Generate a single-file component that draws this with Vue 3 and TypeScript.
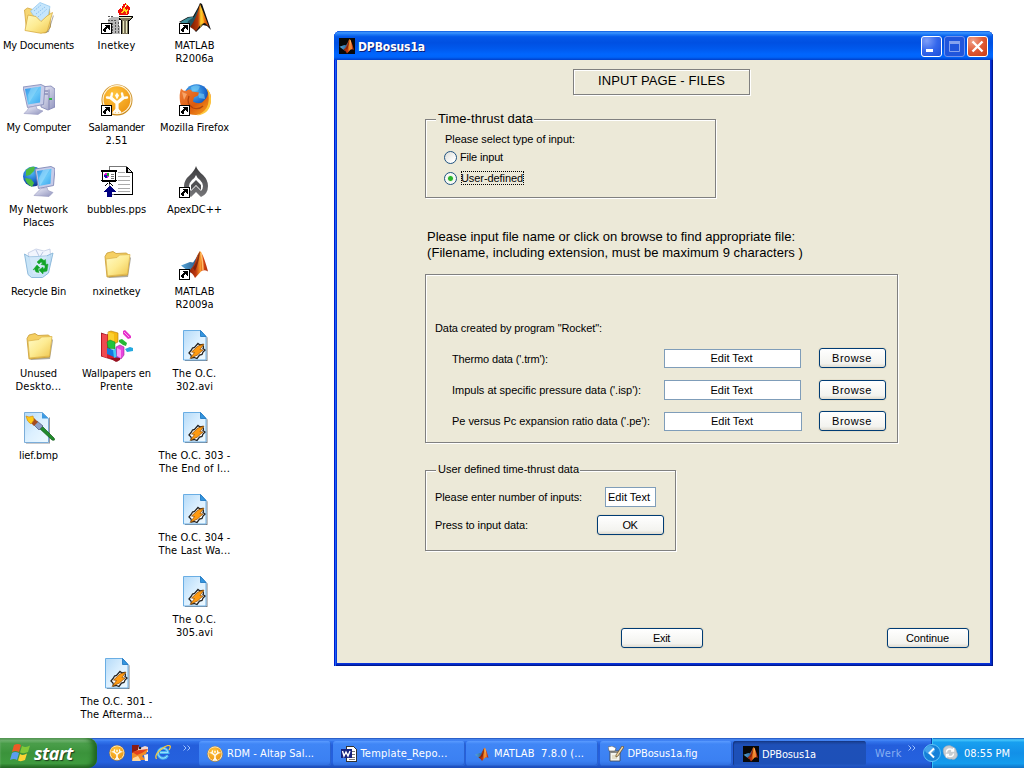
<script setup lang="ts">
import type { Directive } from 'vue'

interface Line { t: string; w: number }
interface Shortcut { icon: string; col: number; row: number; link?: boolean; lines: Line[] }

// Spreads a run of text over a given width by adjusting its letter spacing.
const vFit: Directive<HTMLElement, number> = {
  mounted(el, { value }) {
    const n = (el.textContent ?? '').length
    const natural = el.getBoundingClientRect().width
    el.style.letterSpacing = `${(value - natural) / n}px`
  },
}

const l = (t: string, w: number): Line => ({ t, w })

const shortcuts: Shortcut[] = [
  { icon: 'documents', col: 1, row: 1, lines: [l('My Documents', 71)] },
  { icon: 'inetkey', col: 2, row: 1, link: true, lines: [l('Inetkey', 38)] },
  { icon: 'matlab', col: 3, row: 1, link: true, lines: [l('MATLAB', 40), l('R2006a', 38)] },
  { icon: 'computer', col: 1, row: 2, lines: [l('My Computer', 64)] },
  { icon: 'salamander', col: 2, row: 2, link: true, lines: [l('Salamander', 56), l('2.51', 22)] },
  { icon: 'firefox', col: 3, row: 2, link: true, lines: [l('Mozilla Firefox', 69)] },
  { icon: 'network', col: 1, row: 3, lines: [l('My Network', 59), l('Places', 31)] },
  { icon: 'slides', col: 2, row: 3, lines: [l('bubbles.pps', 59)] },
  { icon: 'apex', col: 3, row: 3, link: true, lines: [l('ApexDC++', 55)] },
  { icon: 'recycle', col: 1, row: 4, lines: [l('Recycle Bin', 55)] },
  { icon: 'folder', col: 2, row: 4, lines: [l('nxinetkey', 48)] },
  { icon: 'matlab9', col: 3, row: 4, link: true, lines: [l('MATLAB', 40), l('R2009a', 38)] },
  { icon: 'folder', col: 1, row: 5, lines: [l('Unused', 37), l('Deskto...', 46)] },
  { icon: 'wallpapers', col: 2, row: 5, lines: [l('Wallpapers en', 69), l('Prente', 33)] },
  { icon: 'video', col: 3, row: 5, lines: [l('The O.C.', 44), l('302.avi', 37)] },
  { icon: 'bitmap', col: 1, row: 6, lines: [l('lief.bmp', 39)] },
  { icon: 'video', col: 3, row: 6, lines: [l('The O.C. 303 -', 72), l('The End of I...', 71)] },
  { icon: 'video', col: 3, row: 7, lines: [l('The O.C. 304 -', 72), l('The Last Wa...', 72)] },
  { icon: 'video', col: 3, row: 8, lines: [l('The O.C.', 44), l('305.avi', 37)] },
  { icon: 'video', col: 2, row: 9, lines: [l('The O.C. 301 -', 72), l('The Afterma...', 72)] },
]

const files = [
  { key: 'trm', label: "Thermo data ('.trm'):", w: 96 },
  { key: 'isp', label: "Impuls at specific pressure data ('.isp'):", w: 189 },
  { key: 'pe', label: "Pe versus Pc expansion ratio data ('.pe'):", w: 198 },
]

const tasks = [
  { icon: 'salamander', label: 'RDM - Altap Sal...', w: 87 },
  { icon: 'word', label: 'Template_Repo...', w: 87 },
  { icon: 'matlab9', label: 'MATLAB\u00a0 7.8.0 (...', w: 90 },
  { icon: 'figure', label: 'DPBosus1a.fig', w: 70 },
  { icon: 'matlabBlack', label: 'DPBosus1a', w: 54, active: true },
]
</script>

<template>
  <div class="screen">
    <svg class="defs" width="0" height="0" aria-hidden="true">
      <defs>
        <linearGradient id="gFolder" x1="0" y1="0" x2="1" y2="1"><stop offset="0" stop-color="#fffbc8" /><stop offset="0.5" stop-color="#fdeb92" /><stop offset="1" stop-color="#efc54c" /></linearGradient>
        <linearGradient id="gPage" x1="0" y1="0" x2="1" y2="1"><stop offset="0" stop-color="#b4daf8" /><stop offset="0.5" stop-color="#dcf0ff" /><stop offset="1" stop-color="#eef9ff" /></linearGradient>
        <linearGradient id="gScreen" x1="0" y1="0" x2="1" y2="1"><stop offset="0" stop-color="#2f93e8" /><stop offset="0.55" stop-color="#69c8f8" /><stop offset="1" stop-color="#38a5ee" /></linearGradient>
        <linearGradient id="gGray" x1="0" y1="0" x2="1" y2="1"><stop offset="0" stop-color="#f4f4fd" /><stop offset="1" stop-color="#8f93bd" /></linearGradient>
        <linearGradient id="gPeak" x1="0" y1="0" x2="1" y2="0"><stop offset="0" stop-color="#7c1c08" /><stop offset="0.4" stop-color="#c23a10" /><stop offset="0.62" stop-color="#f79a2c" /><stop offset="0.75" stop-color="#dc4a14" /><stop offset="1" stop-color="#a82c0c" /></linearGradient>
        <linearGradient id="gPeakOld" x1="0" y1="0" x2="1" y2="0"><stop offset="0" stop-color="#701800" /><stop offset="0.42" stop-color="#b83808" /><stop offset="0.6" stop-color="#ffd030" /><stop offset="0.74" stop-color="#f07c10" /><stop offset="1" stop-color="#b83000" /></linearGradient>
        <linearGradient id="gWing" x1="0" y1="0" x2="1" y2="0"><stop offset="0" stop-color="#58a8dc" /><stop offset="1" stop-color="#204c7c" /></linearGradient>
        <radialGradient id="gSun" cx="0.4" cy="0.3" r="0.8"><stop offset="0" stop-color="#ffc43c" /><stop offset="1" stop-color="#ec9310" /></radialGradient>
        <radialGradient id="gGlobe" cx="0.4" cy="0.3" r="0.75"><stop offset="0" stop-color="#58c0f8" /><stop offset="0.6" stop-color="#1c68cc" /><stop offset="1" stop-color="#0c2c80" /></radialGradient>
        <linearGradient id="gFox" x1="0" y1="0" x2="1" y2="1"><stop offset="0" stop-color="#f0803c" /><stop offset="0.55" stop-color="#dc5a0c" /><stop offset="1" stop-color="#fdaf24" /></linearGradient>
        <linearGradient id="gDark" x1="0" y1="0" x2="0" y2="1"><stop offset="0" stop-color="#3a3a3c" /><stop offset="1" stop-color="#77777a" /></linearGradient>

        <symbol id="arrow" viewBox="0 0 11 11">
          <rect x="0.5" y="0.5" width="10" height="10" fill="#fff" stroke="#000" />
          <path d="M4 2h5v5h-1v-1h-1v-1h-1v1h-1v3h-2v-1h-1v-2h1v-1h1v-1h1v-1h-1z" fill="#000" />
        </symbol>

        <symbol id="folder" viewBox="0 0 32 32">
          <path d="M6 28l20-1 3-18 1 1-3 19-19 1z" fill="#8b8876" opacity="0.7" />
          <path d="M4 8.500l2-3.500 6-1.500 3 2 10.500-.5 2.500 2.500v3l-1.500 16.500-20.500 2z" fill="#f5cf62" stroke="#c79b33" stroke-width="0.8" />
          <path d="M5 11l11-1.500 2.500-2.500 10.500-.5-2.500 19.500-20 2z" fill="url(#gFolder)" stroke="#dab048" stroke-width="0.7" />
        </symbol>

        <symbol id="documents" viewBox="0 0 32 32">
          <path d="M1.500 8l3-2 5 1.500 3 2.500 14-3 1 18-5 6-19-3z" fill="#f6d673" stroke="#d3a63b" stroke-width="0.8" />
          <path d="M7.500 9l9.500-8.500 10 4-2.500 12-7.500 7z" fill="#c6e6fc" stroke="#8cc4ee" stroke-width="0.7" />
          <path d="M11 9l7-6M13 12l9-7M15 15l9-8" stroke="#86bdec" stroke-width="0.9" stroke-dasharray="1.500 1" />
          <path d="M2 28.500l3-15.500 8 1.500 5 5 6-5.500 5.500-3.500-5.500 19.500-6 1.300z" fill="url(#gFolder)" stroke="#d8ac42" stroke-width="0.8" />
          <path d="M22 31l3.500-3 4.500-15 .8 1-5 16z" fill="#77736a" opacity="0.6" />
        </symbol>

        <symbol id="computer" viewBox="0 0 32 32">
          <path d="M18 3l10-1 4 3v18l-7 3-7-3z" fill="url(#gGray)" stroke="#7e82b2" stroke-width="0.8" />
          <path d="M26 5.500v20" stroke="#8184b4" /><path d="M20 7h5M20 10h5" stroke="#686da0" /><rect x="26" y="14" width="3" height="2" fill="#31b648" />
          <path d="M0 3l18-2.500 4 2-1.500 18-16 3z" fill="#c7cce8" stroke="#7f86b5" stroke-width="0.8" />
          <path d="M2 5l16-2.500-1 16-12 2z" fill="url(#gScreen)" /><path d="M8 4l8-1-10 16-1-8z" fill="#9adffc" opacity="0.5" />
          <path d="M6 23.500l7-1.500 1 3 6 2-5 3.500-14-1 3-3z" fill="url(#gGray)" stroke="#989bc2" stroke-width="0.6" />
        </symbol>

        <symbol id="network" viewBox="0 0 32 32">
          <circle cx="10" cy="10.500" r="10" fill="url(#gGlobe)" />
          <path d="M3 4q5-4 9-3l-1 4-4 4-4 1zM2 12l6 1 3 4-2 4Q3 18 2 12z" fill="#4dbb42" /><path d="M14 2l4 2-5 4z" fill="#8bd66d" />
          <path d="M12 3l16-2.500 4 2-1.500 17-15 3z" fill="#c5cbe8" stroke="#767eb0" stroke-width="0.8" />
          <path d="M14 5l14.500-2.200-1 15-11.500 2.200z" fill="url(#gScreen)" /><path d="M20 4l7-1-10 17-1-8z" fill="#ace5ff" opacity="0.5" />
          <path d="M18 22.500l6-1 1 3 5 2-4 4-15-1 3-3z" fill="url(#gGray)" stroke="#9396bd" stroke-width="0.6" />
        </symbol>

        <symbol id="recycle" viewBox="0 0 32 32">
          <path d="M5 5l8-4 8 2 6-2 1 12-6 12-12-2z" fill="#f2f5fd" stroke="#b9c4df" stroke-width="0.7" />
          <path d="M13 2l3 6M20 4l-5 8" stroke="#aab8dc" stroke-width="0.8" />
          <path d="M1.500 6l5 3 17-1 6.500-3-4.500 20-6 4.500h-11l-3.500-3z" fill="#b0d8f4" fill-opacity="0.7" stroke="#86b4d8" stroke-width="0.9" />
          <path d="M6 9l4 17h8l6-18z" fill="#dcebfa" opacity="0.65" />
          <path d="M14 14l4-3.500 3 2 1.500-1 .5 6-5-1 1.500-1.500-1.500-1-2 2zM22 17l3-1-1 7-4 1v2l-4-4 4-3v2l2-1zM14 17l3 3-2 .5 1 4-3-.5-1.500-3-1.500 1z" fill="#12a528" stroke="#12a528" stroke-width="0.5" />
        </symbol>

        <symbol id="matlab" viewBox="0 0 32 32">
          <path d="M0 20l9-5 5-.5 5-9 2-4.500 2 1 9 26-4-4-4-1-7 7-5-6z" fill="#111" />
          <path d="M1.500 20l8-4.500 4-.5 2 2-7 8z" fill="#3c8f9b" /><path d="M9 19l6-4 4-8 1 4-8 14-4-2z" fill="#23535f" />
          <path d="M11 25q6-7 10-23l9 23-4-4-4 1-5 7z" fill="url(#gPeakOld)" /><path d="M21 3l4 17-4 6q1-12 0-23z" fill="#ffc928" opacity="0.7" />
        </symbol>
        <symbol id="matlab9" viewBox="0 0 32 32">
          <path d="M2 17.500l9-3.500 3 .5q3-4 5-8l2 2-5 15-5 1z" fill="url(#gWing)" />
          <path d="M9 23q5-2 8-12 2-6 4-8 3 2 8 20.500-4-2.500-7 0l-6 6.500q-2-5-7-7z" fill="url(#gPeak)" />
          <path d="M19 7l2-4q-1 12-5 20l-2-3q4-5 5-13z" fill="#66180c" opacity="0.7" />
          <path d="M22 5q2 9 2 17" fill="none" stroke="#ffbd6a" stroke-width="1.500" />
        </symbol>
        <symbol id="matlabBlack" viewBox="0 0 32 32">
          <rect width="32" height="32" fill="#080808" /><use href="#matlab9" x="-1" y="-1" width="34" height="34" />
        </symbol>

        <symbol id="salamander" viewBox="0 0 32 32">
          <circle cx="16" cy="16" r="15.500" fill="#c98a1c" /><circle cx="16" cy="15.700" r="14.600" fill="#fff3d8" /><circle cx="16" cy="15.700" r="13.400" fill="url(#gSun)" />
          <g fill="none" stroke="#fffdf5" stroke-linecap="round" stroke-width="3.200">
            <path d="M16 19v9M16 19l-6-5M16 19l6-5" />
            <path d="M10 14l-4-.5M10 14l1-4.500M22 14l4-.5M22 14l-1-4.500M16 25l-3 3M16 25l3 3" stroke-width="2.400" />
          </g>
          <path d="M16 8.500l2 3-2 4-2-4z" fill="#fffdf5" />
        </symbol>

        <symbol id="firefox" viewBox="0 0 32 32">
          <circle cx="17.500" cy="13" r="12.800" fill="url(#gGlobe)" />
          <path d="M12 3q5-3 9-.5l-2 4-6 1zM19 9l6 1 1 5-6-1z" fill="#7acff5" opacity="0.6" />
          <path d="M2 4.500q2 2.500 5 2.500 5-3 6 .5l7 1-1 3-4 2-1 4q4 3 9 1l4-4q3-4 1-9 4 3 4 10-1 14-15 15.500Q3 31 1 18 0 10 2 4.500z" fill="url(#gFox)" />
          <path d="M27.500 4q5 5 4.500 13-1 13-14 14.500 9-4 11-11 2-9-1.500-16.500z" fill="#fdc63c" /><path d="M10 12q-3 8 4 12 6 2 10-2" fill="none" stroke="#9c3408" stroke-width="1.300" opacity="0.7" />
          <path d="M3 8l5 2-3 6z" fill="#f8a468" />
        </symbol>

        <symbol id="inetkey" viewBox="0 0 32 32" shape-rendering="crispEdges">
          <path d="M7 17l4-2h7l1 17H11l-3-6z" fill="#b7b7b7" /><path d="M7 18h9M7 15l5-1M11 21v10M14 20v12M17 20v12" stroke="#555" stroke-dasharray="2 1" />
          <path d="M18 14h13v2l-2 2h-1l-1 14h-6l-1-14-2-1z" fill="#80795e" stroke="#000" /><path d="M18 15h12M22 19v12M25 19v12" stroke="#e8e8c0" />
          <path d="M18 13l-1-4 2-3 2 1 1-5 3-1-1 4 3-2 2 3-1 5-2 2z" fill="#f10d08" /><path d="M20 11l2-3 1-4 2 4 2-2-1 6zM25 2h1v2h-1z" fill="#ffd91c" />
          <path d="M22 10l2-2 1 4h-4z" fill="#e62508" />
        </symbol>

        <symbol id="slides" viewBox="0 0 32 32" shape-rendering="crispEdges">
          <path d="M8.500.5h17l6 6v22h-23z" fill="#fff" stroke="#777" /><path d="M25.500.5v6h6v22h-19" fill="none" stroke="#000" /><path d="M26 1l5 5h-5z" fill="#ddd" stroke="#000" />
          <path d="M17 6.500h7M17 10.500h12M17 14.500h12M17 18.500h12M17 22.500h12M17 25.500h12" stroke="#aaa" />
          <rect x="1" y="5" width="14" height="10" fill="#fff" /><path d="M0 4.500h16M1.500 5v10h13v-10M0 14.500h16" fill="none" stroke="#000" /><path d="M0 4h16v2H0z" fill="#000" />
          <circle cx="5.500" cy="9.500" r="2.500" fill="#e314d5" /><path d="M3 9h3v3H4z" fill="#151aa9" /><path d="M6 7h2v3H6z" fill="#16ae25" />
          <path d="M10 8.500h3M10 10.500h3M10 12.500h3" stroke="#777" /><path d="M8 15v3M7 17l-3 3M9 17l3 3" stroke="#000" />
          <path d="M8.500 19.500l6 6h-3.500v5H6v-5H2.500z" fill="#000080" />
        </symbol>

        <symbol id="apex" viewBox="0 0 32 32">
          <path d="M17 0q1 4 7 9 5 5 5 11 0 8-7 11l-5-5-5 5Q5 28 5 20q0-6 6-11 5-5 6-9z" fill="url(#gDark)" />
          <path d="M17 9q1 3 4 5 3 3 3 6 0 3-2 5l-5-5-5 5q-2-2-2-5 0-3 3-6 3-2 4-5z" fill="#fff" /><path d="M17 14l5 5v5l-5-5-5 5v-5z" fill="#505052" />
        </symbol>

        <symbol id="wallpapers" viewBox="0 0 32 32">
          <path d="M0 3l6 2 3-2v22l8 2v4l-4-1-13-4z" fill="#d91d2b" stroke="#8e1020" stroke-width="0.8" /><path d="M1 4l5 1v23l-5-2z" fill="#ef4a50" />
          <path d="M7 2l3-1 7 2v9l-4 2-6-2z" fill="#f5b912" stroke="#ae7506" stroke-width="0.6" /><path d="M7 2l6 2v8l-6-2z" fill="#ffe044" opacity="0.6" />
          <path d="M6 12l3-2 5 2v7l-7-1z" fill="#21c43b" stroke="#108022" stroke-width="0.5" /><path d="M6 18l7 2 5 2v6l-5-1-7-3z" fill="#1479df" /><path d="M12 20l5-3v9l-4 2z" fill="#42c9f5" />
          <path d="M15 17l4-2 4 2v8l-3 4-4-2z" fill="#e944dd" stroke="#932a93" stroke-width="0.6" /><path d="M16 18l4 2v8l-4-2z" fill="#ff9af6" />
          <path d="M22 1l2-1 6 6v2l-3 1-5-5z" fill="#e432c9" /><path d="M23 2l5 5" stroke="#ff9cf4" /><path d="M18 10l3-1 5 4-1 3-3-1-4-3z" fill="#25b836" />
          <path d="M24 19l5-2 3 1v3l-6 1z" fill="#24a9df" /><path d="M9 28l6 4 4-2v-2z" fill="#991222" />
        </symbol>

        <symbol id="page" viewBox="0 0 32 32">
          <path d="M6 31h22.500V7.500l-1-1V30H6z" fill="#5c5c60" opacity="0.8" />
          <path d="M4.500.5h17l5.500 6v23.500H4.500z" fill="url(#gPage)" stroke="#6aaee4" /><path d="M21.500.5l5.500 6h-5.500z" fill="#3596e0" stroke="#1872bd" stroke-width="0.8" />
        </symbol>
        <symbol id="video" viewBox="0 0 32 32">
          <use href="#page" width="32" height="32" />
          <path d="M19 13.500l2 1.500 2.500-.5 1 2.500-.5 1.500 2 1.500-2 2-1 2.500-2.500.5-2.500 3.500-3-1-2.500.5-.5-3-2-2 2.500-3 1-2 2-.5z" fill="#fff" stroke="#222" stroke-width="1.300" />
          <path d="M25 14l-6 2-6.500 6 3 .5-4.500 6 7.500-3.500 5.500-5-3-.5z" fill="#ff9a10" stroke="#8a4c08" stroke-width="0.7" />
        </symbol>
        <symbol id="bitmap" viewBox="0 0 32 32">
          <path d="M3 30.500h23V5l1 1v25.500H3z" fill="#6b6b70" opacity="0.7" /><path d="M1.500.5h18l6 6v24h-24z" fill="url(#gPage)" stroke="#7badd9" /><path d="M19 .5l6.500 6H19z" fill="#3d9ae2" />
          <path d="M16 16l3-2 12 12q2 3-2 2z" fill="#218b2c" stroke="#125719" stroke-width="0.7" /><path d="M11 13l3-4 6 5-4 4z" fill="#8ca0c8" stroke="#4a5378" stroke-width="0.7" />
          <path d="M7 10l4-4 4 4-4 4z" fill="#a44c20" /><path d="M3 4l3 1 4-1 1 4-3 4q-4-2-5-8z" fill="#ffca18" stroke="#cd840d" stroke-width="0.6" />
        </symbol>

        <symbol id="word" viewBox="0 0 16 16" shape-rendering="crispEdges">
          <path d="M5.500.5h7l3 3v12h-10z" fill="#fff" stroke="#333" /><path d="M10 5.500h4M10 8.500h4M8 11.500h6M8 13.500h6" stroke="#777" />
          <rect y="3" width="11" height="9" fill="#16237e" /><path d="M1.500 5l1.500 5 2-4 2 4 2-5" fill="none" stroke="#fff" stroke-width="1.400" shape-rendering="auto" />
        </symbol>
        <symbol id="figure" viewBox="0 0 16 16">
          <path d="M2 5h10v10H2z" fill="#f4f4ee" stroke="#444" stroke-width="0.8" /><path d="M2 5h10v2H2z" fill="#8a8a86" /><path d="M4 9h5v4H4z" fill="#e5dfc9" />
          <path d="M0 1l4-1 4 2-1 3H1z" fill="#fff" stroke="#555" stroke-width="0.6" /><path d="M14 0l2 1-6 9-2 1V9z" fill="#f3d7a5" stroke="#5a4520" stroke-width="0.7" />
        </symbol>
        <symbol id="duck" viewBox="0 0 16 16">
          <path d="M0 1l5-1 3 3 5-2 3 1v5H0z" fill="#f4d8d0" /><path d="M0 0h7l-1 5-6 4z" fill="#8a1c14" /><path d="M0 8l6-3 4 1 6-2-2 5-4 2 4 4H0z" fill="#f08c28" />
          <path d="M0 7l8-2 8-1-6 4-5 2z" fill="#e2401c" /><path d="M1 13l5-2 3 5H0z" fill="#ffd89a" /><path d="M12 10l4-1v7h-3z" fill="#fff2e4" /><circle cx="8" cy="3" r="1.200" fill="#222" />
        </symbol>
        <symbol id="ie" viewBox="0 0 16 16">
          <path d="M12.500 10.500A5 5 0 1 1 13 7.500H5" fill="none" stroke="#48b6f2" stroke-width="2.800" /><path d="M12.500 10.500A5 5 0 1 1 13 7.500H5" fill="none" stroke="#b0e6ff" stroke-width="0.8" />
          <path d="M1.500 14Q-1 10 6 4.500T15 1q1 1-1 4" fill="none" stroke="#f6c63d" stroke-width="1.300" />
        </symbol>
        <symbol id="flag" viewBox="0 0 20 18">
          <path d="M4 1q4-2 7 0L9 8Q5 6 2 8z" fill="#ed5b25" /><path d="M12 2q4 2 8-.5L18 8q-4 2-8 .5z" fill="#80c838" />
          <path d="M2 9q3-2 7 0l-2 7q-3-2-7 0z" fill="#5b9eee" /><path d="M10 10q3 2 7-.5L15 16q-4 2-7 .5z" fill="#fbd335" />
        </symbol>
        <symbol id="skype" viewBox="0 0 16 16">
          <path d="M4.500 1Q8 0 10 1.500q4 1 4.500 5 2 3.500 0 6-2 3-5 1.500-5 1-7.500-4.500Q-.5 3 4.500 1z" fill="#c8ccd0" stroke="#9da8b4" stroke-width="0.6" />
          <path d="M4.500 7.500q0-3.500 3.500-3.500 2 0 3 1.500M11.500 3v3H9M11.500 8.500q0 3-3.500 3-2 0-3-1.500M4.500 12.500v-3h2.500" fill="none" stroke="#fff" stroke-width="1.400" />
        </symbol>
      </defs>
    </svg>

    <main class="desktop">
      <div class="icons">
        <div v-for="(s, i) in shortcuts" :key="i" class="shortcut" :style="{ gridColumn: s.col, gridRow: s.row }">
          <svg class="pic" viewBox="0 0 32 32">
            <use :href="'#' + s.icon" width="32" height="32" />
            <use v-if="s.link" href="#arrow" x="0" y="21" width="11" height="11" />
          </svg>
          <span v-for="line in s.lines" :key="line.t" v-fit="line.w" class="caption">{{ line.t }}</span>
        </div>
      </div>

      <section class="window">
        <header class="titlebar">
          <svg class="small"><use href="#matlabBlack" width="16" height="16" /></svg>
          <b v-fit="67" class="name">DPBosus1a</b>
          <div class="controls">
            <i class="ctl min"><svg viewBox="0 0 21 21"><path d="M5 13h7v3H5z" fill="#fff" /></svg></i>
            <i class="ctl max"><svg viewBox="0 0 21 21"><path d="M5.500 6.500h10v9h-10z" fill="none" stroke="#85a2ee" /><path d="M5 5h11v3H5z" fill="#85a2ee" /></svg></i>
            <i class="ctl close"><svg viewBox="0 0 21 21"><path d="M5.500 5.500l10 10M15.500 5.500l-10 10" stroke="#fff" stroke-width="2.400" /></svg></i>
          </div>
        </header>

        <div class="body">
          <div class="heading etched"><span v-fit="127" class="big">INPUT PAGE - FILES</span></div>

          <div class="panel etched thrust">
            <div class="legend big"><span v-fit="95">Time-thrust data</span></div>
            <p class="ask"><span v-fit="130">Please select type of input:</span></p>
            <label class="option"><i class="radio"></i><span class="choice"><span v-fit="43">File input</span></span></label>
            <label class="option second"><i class="radio on"></i><span class="choice focus"><span v-fit="62">User-defined</span></span></label>
          </div>

          <p class="hint big"><span v-fit="368">Please input file name or click on browse to find appropriate file:</span></p>
          <p class="hint big"><span v-fit="376">(Filename, including extension, must be maximum 9 characters )</span></p>

          <div class="panel etched rocket">
            <p class="source"><span v-fit="167">Data created by program "Rocket":</span></p>
            <div v-for="f in files" :key="f.key" class="row" :class="f.key">
              <div class="cell-label"><span v-fit="f.w">{{ f.label }}</span></div>
              <div class="edit"><span v-fit="42">Edit Text</span></div>
              <div class="btn"><span v-fit="40">Browse</span></div>
            </div>
          </div>

          <div class="panel etched user">
            <div class="legend"><span v-fit="141">User defined time-thrust data</span></div>
            <div class="entry">
              <div class="entry-label"><span v-fit="147">Please enter number of inputs:</span></div>
              <div class="edit short"><span v-fit="42">Edit Text</span></div>
            </div>
            <div class="entry press">
              <div class="entry-label tight"><span v-fit="93">Press to input data:</span></div>
              <div class="btn ok"><span v-fit="15">OK</span></div>
            </div>
          </div>

          <div class="actions">
            <div class="btn wide"><span v-fit="17">Exit</span></div>
            <div class="btn wide"><span v-fit="43">Continue</span></div>
          </div>
        </div>
      </section>
    </main>

    <footer class="taskbar">
      <div class="start">
        <svg class="flag"><use href="#flag" width="20" height="18" /></svg>
        <span v-fit="39">start</span>
      </div>
      <div class="quick">
        <svg class="small"><use href="#salamander" width="16" height="16" /></svg>
        <svg class="small"><use href="#duck" width="16" height="16" /></svg>
        <svg class="small"><use href="#ie" width="16" height="16" /></svg>
        <svg class="chev" viewBox="0 0 8 6"><path d="M.5.5L3 3 .5 5.500M4.500.5L7 3 4.500 5.500" /></svg>
      </div>
      <div class="tasks">
        <div v-for="t in tasks" :key="t.label" class="task" :class="{ active: t.active }">
          <svg class="small"><use :href="'#' + t.icon" width="16" height="16" /></svg>
          <span v-fit="t.w">{{ t.label }}</span>
        </div>
      </div>
      <div class="werk">
        <span v-fit="27">Werk</span>
        <svg class="chev" viewBox="0 0 8 6"><path d="M.5.5L3 3 .5 5.500M4.500.5L7 3 4.500 5.500" /></svg>
      </div>
      <div class="tray">
        <svg class="collapse" viewBox="0 0 18 18">
          <circle cx="9" cy="9" r="8.500" fill="#1580d8" stroke="#63c4f6" /><ellipse cx="7" cy="6" rx="5" ry="4" fill="#66baf8" opacity="0.6" />
          <path d="M11 4.500L6.500 9l4.500 4.500" fill="none" stroke="#fff" stroke-width="2" />
        </svg>
        <svg class="small"><use href="#skype" width="16" height="16" /></svg>
        <span v-fit="46" class="clock">08:55 PM</span>
      </div>
    </footer>
  </div>
</template>

<style>
html, body { margin: 0; overflow: hidden; }
</style>

<style scoped>
.screen { width: 1024px; height: 768px; display: flex; flex-direction: column; background: #fff; overflow: hidden; font: 11px/13px "DejaVu Sans Condensed", "DejaVu Sans", sans-serif; color: #000; }
.screen *, .screen { box-sizing: border-box; }
.screen span { display: inline-block; white-space: nowrap; }
.screen p { margin: 0; }
.defs { position: absolute; }
.desktop { position: relative; height: 738px; }
.icons { display: grid; grid-template-columns: repeat(3, 78px); grid-template-rows: repeat(9, 82px); }
.shortcut { display: flex; flex-direction: column; align-items: center; padding-top: 2px; }
.pic { display: block; width: 32px; height: 32px; margin-bottom: 5px; flex: none; }
.caption { margin-right: 1px; }

.window { position: absolute; left: 334px; top: 31px; width: 659px; height: 635px; display: flex; flex-direction: column; padding: 0 3px 3px; background: #0831d9; border-radius: 6px 6px 0 0; box-shadow: inset 1px 0 #0019cf, inset 2px 0 #1664f4, inset -1px -1px #001790, inset -2px -2px #0029c2; }
.titlebar { height: 29px; margin: 0 -3px; padding: 2px 5px 0; display: flex; align-items: center; border-radius: 6px 6px 0 0; background: linear-gradient(#0a58e0 0, #3d96ff 6%, #1c78f6 12%, #0358e8 20%, #0050e2 40%, #0058ec 60%, #0066fe 80%, #0064fa 90%, #003fc9 100%); }
.name { display: inline-block; margin: 1px 0 0 3px; font: bold 12px/16px "DejaVu Sans Condensed", "DejaVu Sans", sans-serif; color: #fff; text-shadow: 1px 1px #0a1e7c; }
.small { display: block; width: 16px; height: 16px; flex: none; }
.titlebar .small { margin-top: -2px; }
.controls { display: flex; gap: 2px; margin-left: auto; }
.ctl { display: block; width: 21px; height: 21px; border: 1px solid #fff; border-radius: 3px; background: radial-gradient(circle at 25% 20%, #7f9ff8, #3467ec 50%, #1d4fd8); }
.ctl svg { display: block; width: 21px; height: 21px; margin: -1px; }
.max { border-color: #6f91ec; background: #2055dc; }
.close { background: radial-gradient(circle at 25% 20%, #f0a088, #e05a35 50%, #c93a12); }

.body { height: 603px; background: #ece9d8; display: flex; flex-direction: column; font: 11px/13px "Liberation Sans", Arial, sans-serif; }
.big { font-size: 13px; line-height: 16px; }
.etched { border: 1px solid #808080; box-shadow: 1px 1px #fff, inset 1px 1px #fff; }
.heading { width: 177px; height: 26px; margin: 9px 0 0 236px; padding-top: 3px; text-align: center; }
.panel { margin-left: 88px; display: flex; flex-direction: column; align-items: flex-start; }
.legend { height: 16px; margin: -9px 0 0 10px; padding: 0 1px 0 2px; background: #ece9d8; }
.thrust { width: 291px; height: 79px; margin-top: 24px; }
.ask { margin: 6px 0 0 19px !important; height: 13px; }
.option { display: flex; align-items: center; height: 14px; margin: 4px 0 0 18px; }
.option.second { margin-top: 7px; }
.radio { width: 13px; height: 13px; margin-right: 3px; border: 1px solid #1f5280; border-radius: 50%; background: linear-gradient(135deg, #dcdcd6, #fff 80%); }
.radio.on { background: radial-gradient(circle, #2bb42b 0 2px, #e9f5e6 3px, #f9f9f6 4px); }
.choice { height: 14px; line-height: 14px; }
.focus { margin-left: 1px; outline: 1px dotted #000; outline-offset: -1px; width: 63px; }
.hint { height: 16px; margin-left: 90px !important; }
.thrust + .hint { margin-top: 31px !important; }
.rocket { width: 473px; height: 169px; margin-top: 13px; }
.source { margin: 47px 0 0 9px !important; height: 13px; }
.row { display: flex; align-items: flex-start; margin-left: 26px; }
.cell-label { width: 212px; padding-top: 4px; }
.edit { display: flex; align-items: center; justify-content: center; width: 137px; height: 19px; padding-right: 2px; background: #fff; border: 1px solid #7f9db9; }
.btn { display: flex; align-items: center; justify-content: center; width: 67px; height: 20px; border: 1px solid #003c74; border-radius: 3px; background: linear-gradient(#fff, #f3f3ef 80%, #dfdbd0); box-shadow: 0 0 0 1px #e4dfcc; }
.ok { padding-right: 1px; }
.row .btn { margin-left: 18px; padding-right: 1px; }
.trm { margin-top: 13px; height: 32px; }
.trm .cell-label { padding-top: 5px; }
.trm .edit { margin-top: 1px; padding-bottom: 1px; }
.isp { height: 31px; }
.isp .edit { height: 20px; }
.pe { height: 20px; }
.pe .edit { margin-top: 1px; width: 138px; padding-bottom: 1px; }
.pe .btn { margin-left: 17px; }
.user { width: 251px; height: 81px; margin-top: 27px; }
.user .legend { height: 14px; margin-top: -8px; }
.entry { display: flex; align-items: center; height: 20px; margin: 10px 0 0 9px; }
.entry-label { width: 170px; }
.entry-label.tight { width: 162px; }
.press { margin-top: 8px; }
.short { width: 51px; height: 20px; padding-right: 3px; }
.actions { display: flex; justify-content: space-between; margin: 77px 21px 0 284px; }
.wide { width: 82px; padding-right: 1px; }

.taskbar { height: 30px; display: flex; color: #fff; background: linear-gradient(#1f4fb8 0, #4a8cf8 6%, #3274ec 12%, #245edb 24%, #2561de 80%, #1c4cb8 100%); }
.start { width: 97px; display: flex; align-items: center; padding-left: 10px; border-radius: 0 9px 9px 0; background: linear-gradient(#3a843a 0, #77b977 8%, #4a9e4a 18%, #3b933b 50%, #3f9b3f 85%, #286a28 100%); box-shadow: inset -4px 0 5px #1e641e, inset 0 2px 2px #80c080; font: italic bold 18px/20px "Open Sans", sans-serif; text-shadow: 1px 1px 1px #1c3c1c; }
.flag { width: 20px; height: 18px; margin-right: 4px; }
.quick { width: 102px; display: flex; align-items: center; gap: 7px; padding-left: 12px; }
.quick .chev { margin: -10px 0 0 5px; }
.chev { width: 8px; height: 6px; flex: none; }
.chev path { fill: none; stroke: #9fc3ff; }
.tasks { display: flex; gap: 1.5px; padding: 3px 0 2px; }
.task { width: 132px; display: flex; align-items: center; gap: 4px; padding-left: 8px; border-radius: 3px; background: linear-gradient(#5a9bff 0, #4086f6 12%, #3b80f2 80%, #2f6cdc 100%); box-shadow: inset -1px -1px #2a62d0; }
.task.active { width: 133px; padding: 1px 0 0 10px; gap: 3px; background: linear-gradient(#173c8c, #1e50b8 15%, #1d50b8 90%, #2458c4); box-shadow: inset 1px 1px #163a8a; }
.werk { width: 65px; display: flex; align-items: center; padding-left: 9px; color: #86aef2; }
.werk .chev { margin: -10px 0 0 6px; }
.tray { flex: 1; display: flex; align-items: center; border-left: 1px solid #1042af; background: linear-gradient(#0c59b9 0, #4ac8fc 6%, #18a0f0 14%, #1290e8 50%, #149ced 85%, #0f72c6 100%); box-shadow: inset 1px 0 #35c5fa; }
.collapse { width: 18px; height: 18px; margin: 0 1px 0 -9px; flex: none; }
.clock { margin-left: 6px; }
</style>
